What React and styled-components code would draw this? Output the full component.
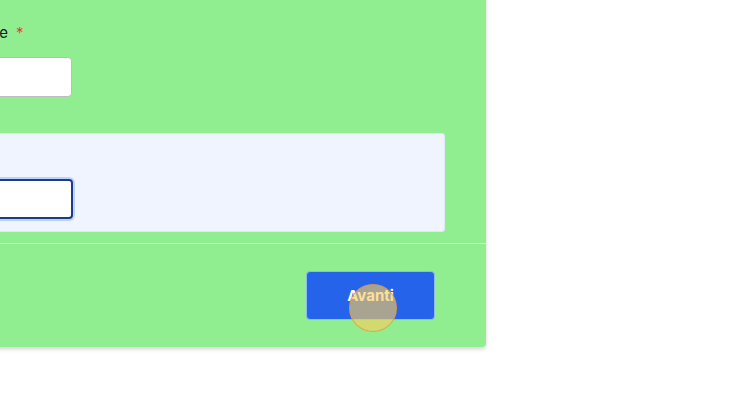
import styled, { createGlobalStyle } from "styled-components";

const GlobalStyle = createGlobalStyle`
  html, body {
    margin: 0;
    padding: 0;
    background: #ffffff;
    overflow: hidden;
    font-family: Inter, "Liberation Sans", sans-serif;
  }
`;

const Page = styled.div`
  width: 746px;
  height: 420px;
  overflow: hidden;
`;

const Panel = styled.form`
  width: 800px;
  margin: -20px 0 0 -314px;
  background: #90ee90;
  border-radius: 0 0 4px 4px;
  box-shadow: 0 2px 4px rgba(0, 0, 0, 0.18);
`;

const Body = styled.div`
  display: flex;
  flex-direction: column;
  gap: 36px;
  padding: 44px 41px 11px 40px;
`;

const Field = styled.div`
  display: flex;
  flex-direction: column;
  gap: 15px;
`;

const Label = styled.label`
  font-size: 15px;
  color: #111827;
  line-height: 18px;
  padding-left: 213px;
`;

const Required = styled.span`
  color: #e53e3e;
  margin-left: 8px;
`;

const Input = styled.input`
  box-sizing: border-box;
  width: 346px;
  height: 40px;
  border: 1px solid #bdbdbd;
  border-radius: 4px;
  background: #fff;
  font: inherit;
  outline: none;
  ${(p) =>
    p.$focused &&
    `
    border: 2px solid #1e3a8a;
    box-shadow: 0 0 0 2px #bcd3fb;
  `}
`;

const Group = styled.div`
  background: #eff4fe;
  border: 1px solid #dfe8f7;
  border-radius: 3px;
  padding: 45px 0 12px 0;
`;

const Footer = styled.div`
  display: flex;
  justify-content: flex-end;
  border-top: 1px solid #c9f3c9;
  padding: 27px 51px 27px 0;
`;

const Button = styled.button`
  position: relative;
  width: 129px;
  height: 49px;
  background: #2563eb;
  color: #fff;
  border: 1px solid #8fb8f7;
  border-radius: 4px;
  font-family: Inter, "Liberation Sans", sans-serif;
  font-size: 15px;
  font-weight: 700;
  cursor: pointer;
`;

const Cursor = styled.span`
  position: absolute;
  left: 42px;
  top: 12px;
  width: 46px;
  height: 46px;
  border-radius: 50%;
  background: rgba(250, 204, 90, 0.62);
  border: 1px solid rgba(225, 150, 60, 0.7);
  pointer-events: none;
`;

export default function App() {
  return (
    <Page>
      <GlobalStyle />
      <Panel onSubmit={(e) => e.preventDefault()}>
        <Body>
          <Field>
            <Label>
              Cognome<Required>*</Required>
            </Label>
            <Input type="text" />
          </Field>
          <Group>
            <Input type="text" $focused />
          </Group>
        </Body>
        <Footer>
          <Button type="submit">
            Avanti
            <Cursor />
          </Button>
        </Footer>
      </Panel>
    </Page>
  );
}
